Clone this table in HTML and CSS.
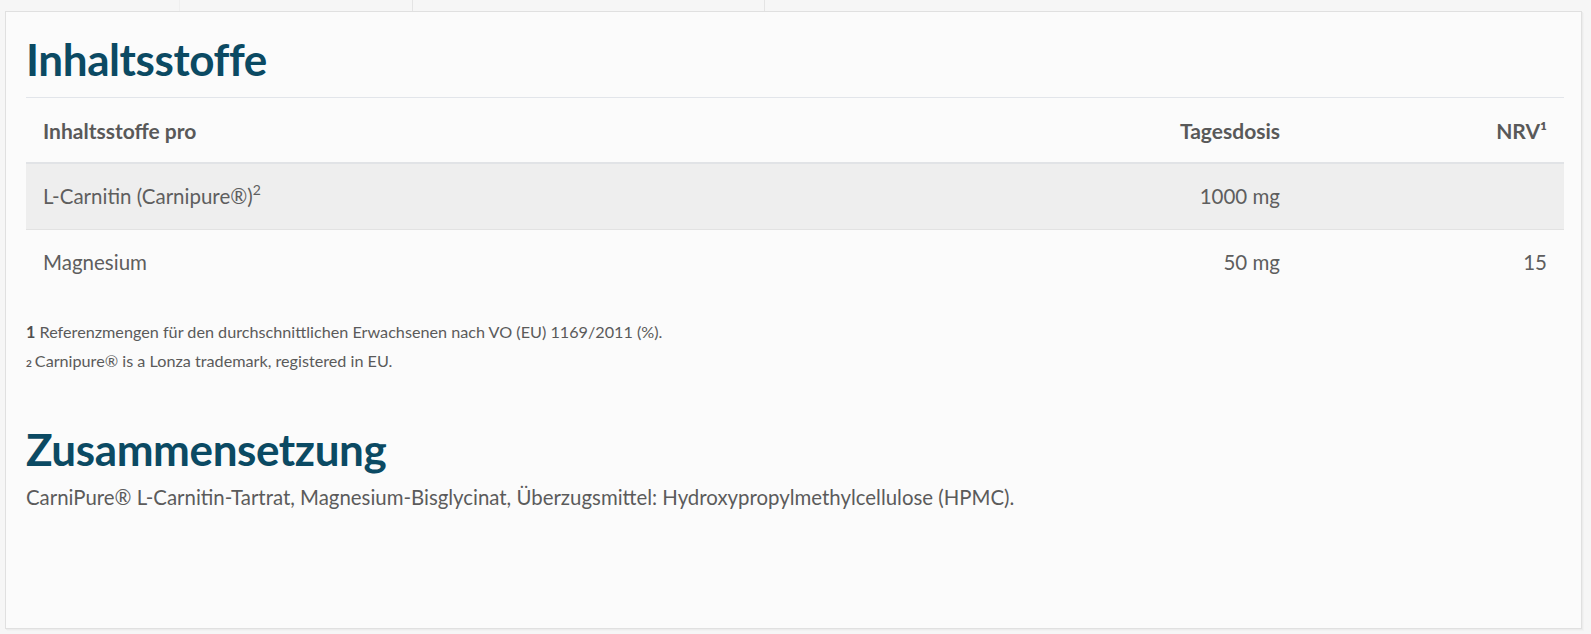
FILE: index.html
```html
<!DOCTYPE html>
<html lang="de">
<head>
<meta charset="utf-8">
<title>Inhaltsstoffe</title>
<link rel="stylesheet" href="styles.css">
</head>
<body>
<div class="page">
  <div class="tabs">
    <div class="tab tab-1"></div>
    <div class="tab tab-2"></div>
    <div class="tab tab-3"></div>
    <div class="tab tab-rest"></div>
  </div>
  <div class="card">
    <h2 class="section-title title-ingredients">Inhaltsstoffe</h2>
    <table class="nutri">
      <thead>
        <tr>
          <th class="col-name">Inhaltsstoffe pro</th>
          <th class="col-dose">Tagesdosis</th>
          <th class="col-nrv">NRV¹</th>
        </tr>
      </thead>
      <tbody>
        <tr class="row-alt">
          <td class="col-name">L-Carnitin (Carnipure®)<sup>2</sup></td>
          <td class="col-dose">1000 mg</td>
          <td class="col-nrv"></td>
        </tr>
        <tr>
          <td class="col-name">Magnesium</td>
          <td class="col-dose">50 mg</td>
          <td class="col-nrv">15</td>
        </tr>
      </tbody>
    </table>
    <div class="footnotes">
      <p class="fn"><strong>1</strong> Referenzmengen für den durchschnittlichen Erwachsenen nach VO (EU) 1169/2011 (%).</p>
      <p class="fn"><span class="fn-num">2</span>Carnipure® is a Lonza trademark, registered in EU.</p>
    </div>
    <h2 class="section-title title-composition">Zusammensetzung</h2>
    <p class="composition">CarniPure® L-Carnitin-Tartrat, Magnesium-Bisglycinat, Überzugsmittel: Hydroxypropylmethylcellulose (HPMC).</p>
  </div>
</div>
</body>
</html>
```

FILE: styles.css
```css
* { box-sizing: border-box; }

html, body {
  margin: 0;
  padding: 0;
  background: #f6f6f6;
}

body {
  font-family: Lato, "Open Sans", Arial, sans-serif;
  color: #5b5b5b;
}

.page {
  width: 1591px;
  height: 634px;
  padding: 0 9px 5px 5px;
  display: flex;
  flex-direction: column;
}

.tabs {
  display: flex;
  height: 11px;
  flex: 0 0 11px;
}

.tab { height: 11px; border-right: 1px solid #e4e4e4; }
.tab-1 { width: 175px; border-right-color: #efefef; }
.tab-2 { width: 233px; }
.tab-3 { width: 352px; }
.tab-rest { flex: 1; border-right: none; }

.card {
  flex: 1;
  background: #fbfbfb;
  border: 1px solid #e0e0e0;
  box-shadow: 1px 1px 0 #ececec, 2px 2px 0 #f2f2f2;
  padding: 0 17px 0 20px;
}

.section-title {
  margin: 0;
  font-weight: 700;
  color: #0b4a63;
  font-size: 44px;
  letter-spacing: -0.4px;
}

.title-ingredients {
  padding-top: 22px;
  line-height: 50px;
  padding-bottom: 13px;
  border-bottom: 1px solid #e2e5ea;
}

.nutri {
  width: 100%;
  border-collapse: collapse;
  font-size: 20.5px;
}

.nutri th, .nutri td {
  padding: 0 17px;
  height: 66px;
  vertical-align: middle;
}

.nutri th {
  font-weight: 700;
  font-size: 21px;
  color: #595959;
  height: 65px;
  border-bottom: 2px solid #e1e3e6;
}

.nutri td { font-weight: 400; color: #5e5e5e; }

.nutri .col-name { text-align: left; }
.nutri .col-dose { text-align: right; }
.nutri .col-nrv { text-align: right; width: 267px; }

.row-alt td {
  background: #eeeeee;
  border-bottom: 1px solid #e2e2e2;
}

sup { font-size: 14px; line-height: 0; vertical-align: 9px; }

.footnotes {
  padding-top: 22px;
}

.fn {
  margin: 0;
  font-size: 16.2px;
  line-height: 29px;
  color: #5a5a5a;
}

.fn strong { color: #4e4e4e; }

.fn-num { font-size: 10px; font-weight: 700; margin-right: 3px; }

.title-composition {
  margin-top: 46px;
  line-height: 50px;
}

.composition {
  margin: 9px 0 0;
  font-size: 20.4px;
  line-height: 28px;
  color: #5b5b5b;
}
```
